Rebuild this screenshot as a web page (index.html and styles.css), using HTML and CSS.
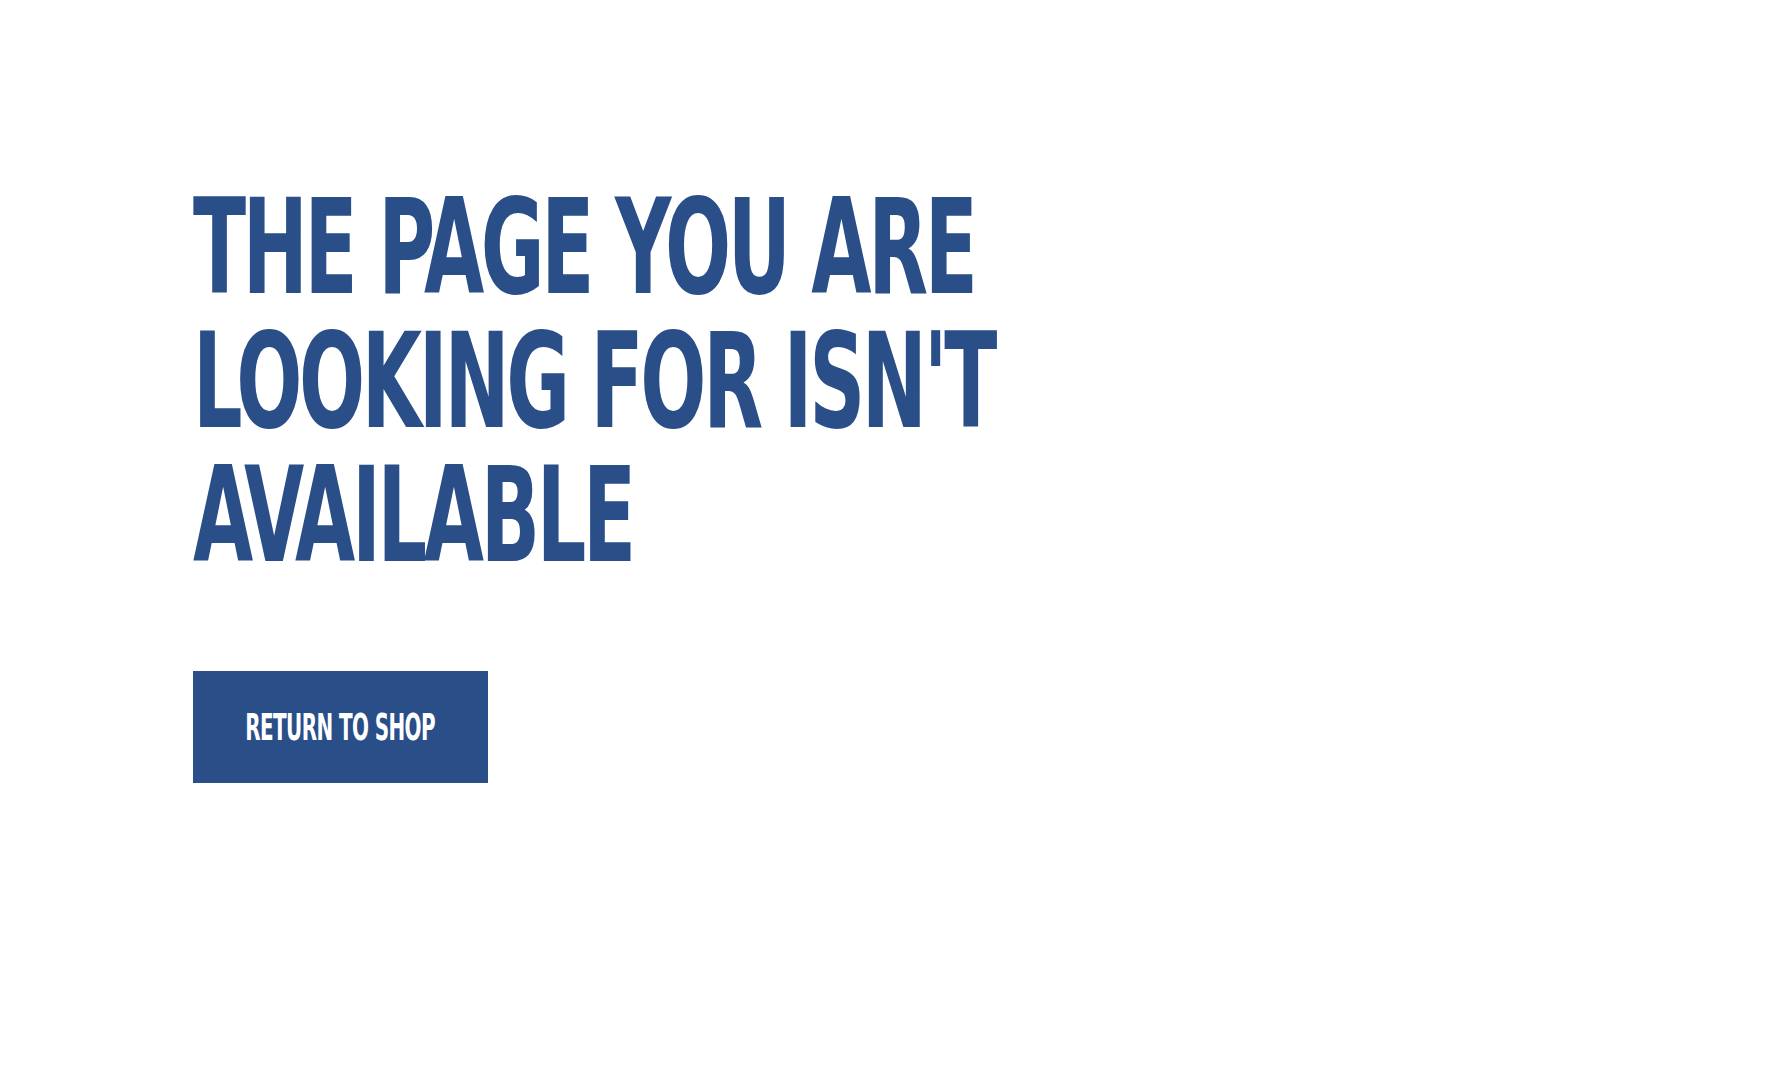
FILE: index.html
```html
<!DOCTYPE html>
<html lang="en">
<head>
<meta charset="utf-8">
<title>Page not found</title>
<link rel="stylesheet" href="styles.css">
</head>
<body>
<main class="notfound">
  <h1 class="notfound-title"><span class="squeeze">THE PAGE YOU ARE<br>LOOKING FOR ISN'T<br>AVAILABLE</span></h1>
  <a class="shop-btn" href="#"><span class="btn-label">RETURN TO SHOP</span></a>
</main>
</body>
</html>
```
FILE: styles.css
```css
html, body {
  margin: 0;
  padding: 0;
  background: #ffffff;
}
.notfound {
  display: flex;
  flex-direction: column;
  align-items: flex-start;
  padding: 181px 0 0 193px;
  gap: 88px;
}
.notfound-title {
  margin: 0;
  font-family: "Liberation Sans Narrow", "DejaVu Sans Condensed", "Liberation Sans", sans-serif;
  font-weight: 700;
  font-size: 131px;
  line-height: 134px;
  letter-spacing: -5px;
  color: #294e88;
  white-space: nowrap;
}
.squeeze {
  display: inline-block;
  transform: scaleX(0.66);
  transform-origin: left top;
}
.shop-btn {
  display: flex;
  align-items: center;
  justify-content: center;
  width: 295px;
  height: 112px;
  background: #294e88;
  color: #ffffff;
  text-decoration: none;
}
.btn-label {
  display: inline-block;
  font-family: "Liberation Sans Narrow", "DejaVu Sans Condensed", "Liberation Sans", sans-serif;
  font-weight: 700;
  font-size: 37px;
  line-height: 1;
  letter-spacing: -1px;
  transform: scaleX(0.6);
  white-space: nowrap;
}
```
